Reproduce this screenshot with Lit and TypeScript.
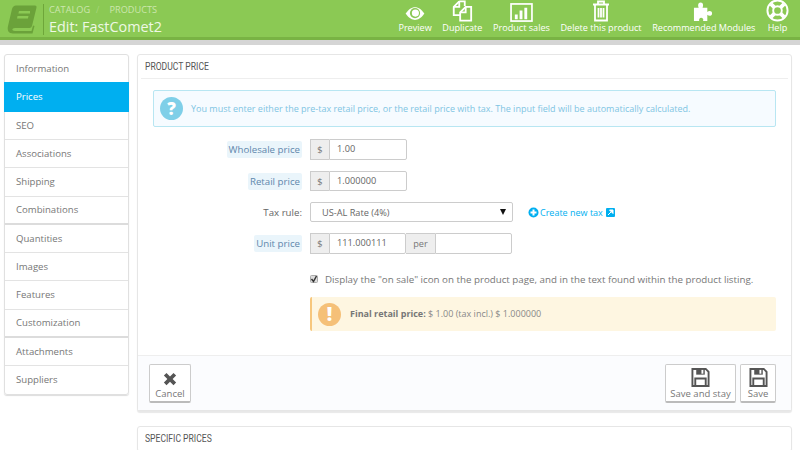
import { LitElement, html, css, svg } from "lit";
import { customElement } from "lit/decorators.js";

const tabs = ["Information","Prices","SEO","Associations","Shipping","Combinations","Quantities","Images","Features","Customization","Attachments","Suppliers"];
const thick = new Set(["Combinations","Customization"]);

const ico = {
  eye: svg`<svg width="24" height="17" viewBox="0 0 26 20"><path d="M2 10C6 4 10 2.500 13 2.500S20 4 24 10C20 16 16 17.500 13 17.500S6 16 2 10Z" fill="#fff"/><circle cx="13" cy="9.500" r="6" fill="#8bc954"/><circle cx="13.500" cy="9.500" r="4.200" fill="#fff"/></svg>`,
  dup: svg`<svg width="22" height="23" viewBox="0 0 24 24" fill="none" stroke="#fff" stroke-width="2"><path d="M9 2h6v5M9 2 3 8v9h7"/><path d="M3 8h6V2"/><path d="M16 8h6v15H10V14z"/><path d="M10 14h6V8"/></svg>`,
  sales: svg`<svg width="23" height="19" viewBox="0 0 24 20"><rect x="1" y="1" width="22" height="18" fill="none" stroke="#fff" stroke-width="1.800"/><path d="M5 12h3v5H5zM10 8h3v9h-3zM15 5h3v12h-3z" fill="#fff"/></svg>`,
  trash: svg`<svg width="18" height="22" viewBox="0 0 18 22" fill="none" stroke="#fff" stroke-width="1.800"><path d="M1 4.500h16M6 4V1.500h6V4M3 5v15.500h12V5"/><path d="M6.500 8v9.500M9 8v9.500M11.500 8v9.500"/></svg>`,
  puzzle: svg`<svg width="21" height="21" viewBox="0 0 22 22"><path d="M1 7h5C5 5 5 1.500 8 1.500S11 5 10 7h5v4.500c1.500-1.500 5-1.500 5 1.500s-3.500 3-5 1.500V21h-4.500c1-2-.5-3.500-2-3.500S6 19 6.500 21H1z" fill="#fff"/></svg>`,
  help: svg`<svg width="23" height="23" viewBox="0 0 24 24" fill="none" stroke="#fff"><circle cx="12" cy="12" r="10.500" stroke-width="2"/><circle cx="12" cy="12" r="4.500" stroke-width="2"/><path d="M5 5l4 4M19 5l-4 4M5 19l4-4M19 19l-4-4" stroke-width="4"/></svg>`,
};
const disk = svg`<svg width="19" height="19" viewBox="0 0 19 20"><path d="M1 1h14l3 3v15H1z" fill="none" stroke="#555" stroke-width="2"/><path d="M5 1h9v6H5z" fill="#555"/><path d="M10.500 2h2v4h-2z" fill="#fff"/><path d="M4 11h11v8H4z" fill="#fff" stroke="#555" stroke-width="2"/></svg>`;

@customElement("app-root")
export class AppRoot extends LitElement {
  static styles = css`
    :host { display: block; width: 800px; height: 450px; overflow: hidden; background: #fff; font-family: "Open Sans", sans-serif; font-size: 9.6px; color: #666; }
    * { box-sizing: border-box; }
    .top { height: 40px; background: #8bc954; border-bottom: 3px solid #79b344; display: flex; align-items: stretch; justify-content: space-between; overflow: hidden; }
    .brand { display: flex; align-items: flex-start; padding: 4px 0 0 7px; }
    .book { width: 37px; height: 31px; border-right: 1px solid #6ea63a; margin-right: 5px; padding-top: 1px; }
    .crumbs { color: #cbe7ae; font-size: 9.200px; line-height: 12px; display: flex; gap: 6px; }
    .crumbs i { font-style: normal; color: #a6d67b; margin-right: 4px; }
    .title { color: #eef8e4; font-size: 14.400px; line-height: 20px; margin-top: 1px; }
    .actions { display: flex; align-items: flex-end; gap: 10.600px; padding: 0 11px 3px 0; }
    .act { display: flex; flex-direction: column; align-items: center; color: #fff; font-size: 9.100px; line-height: 12px; white-space: nowrap; }
    .act svg { display: block; }
    .shade { height: 5px; background: #d5d5d5; }
    .main { display: flex; align-items: flex-start; gap: 8px; padding: 9px 8px 0 4px; }
    .side { width: 125px; border: 1px solid #e0e0e0; border-radius: 3px; box-shadow: 0 1px 1px #ddd; flex: none; }
    .tab { height: 28.250px; line-height: 28px; padding-left: 11px; border-bottom: 1px solid #e3e3e3; color: #777; }
    .tab:last-child { border-bottom: 0; }
    .tab.on { background: #00aff0; color: #fff; margin: -1px -1px 0; padding-left: 12px; height: 29.500px; border: 0; line-height: 29px; }
    .tab.thick { border-bottom-width: 2px; border-bottom-color: #dcdcdc; line-height: 26px; }
    .col { flex: 1; display: flex; flex-direction: column; gap: 15px; min-width: 0; }
    .panel { border: 1px solid #e6e6e6; border-radius: 3px; background: #fff; box-shadow: 0 2px 1px #e8e8e8; }
    .head { margin: 0 3px; padding-left: 4px; height: 24px; line-height: 23px; border-bottom: 1px solid #eee; font-family: "Roboto", sans-serif; font-size: 11.300px; font-weight: 400; color: #555; white-space: nowrap; }
    .head span { display: inline-block; transform: scaleX(.76); transform-origin: left center; }
    .alert { margin: 11px 15px 0; height: 37px; display: flex; align-items: center; gap: 8px; padding-left: 6px; background: #f6fbff; border: 1px solid #b8e6f2; border-radius: 2px; color: #7fc5e3; font-size: 9px; }
    .qmark { width: 23px; height: 23px; border-radius: 50%; background: #7fcfe8; color: #fff; font-weight: 800; font-size: 17px; line-height: 23px; text-align: center; flex: none; }
    .form { display: grid; grid-template-columns: 164px auto; column-gap: 8px; row-gap: 11px; margin-top: 12px; align-items: center; justify-content: start; }
    .lab { text-align: right; white-space: nowrap; font-size: 9.700px; line-height: 13px; }
    .lab span { padding: 2px 2px; }
    .tip { background: #eaf5fb; color: #5f87ac; border-radius: 2px; }
    .group { display: flex; height: 21px; }
    .group.h20 { height: 20px; }
    .add { width: 19px; background: #eee; border: 1px solid #ccc; border-right: 0; display: flex; align-items: center; justify-content: center; color: #777; font-size: 9.200px; }
    .add.per { width: 29px; border-left: 0; }
    .inp { border: 1px solid #ccc; background: #fff; padding-left: 7px; line-height: 18px; font-size: 9.200px; color: #666; border-radius: 0 2px 2px 0; }
    .w78 { width: 78px; } .w77 { width: 77px; }
    .sel { width: 203px; height: 20px; border: 1px solid #ccc; border-radius: 2px; padding-left: 11px; line-height: 20px; font-size: 9.200px; position: relative; }
    .arrow { position: absolute; right: 6px; top: 6px; width: 0; height: 0; border: 3.500px solid transparent; border-top: 6px solid #111; border-bottom: 0; }
    .taxrow { display: flex; align-items: center; gap: 15px; }
    .new { display: flex; align-items: center; gap: 1px; color: #00aff0; font-size: 9px; white-space: nowrap; }
    .new svg:last-child { margin-left: 2px; }
    .chk { margin: 18px 0 0 172px; display: flex; align-items: center; gap: 7px; font-size: 9.750px; height: 14px; color: #777; white-space: nowrap; }
    .box { width: 8px; height: 8px; background: #ddd; border: 1px solid #aaa; border-radius: 1.500px; position: relative; flex: none; }
    .warn { margin: 11px 15px 0 172px; height: 34px; display: flex; align-items: center; gap: 9px; padding-left: 6px; background: #fef6e1; border-left: 2px solid #f7c77d; border-radius: 2px; color: #888; font-size: 9px; white-space: pre; }
    .warn span { margin-bottom: 2px; }
    .warn b { color: #777; }
    .bang { width: 23px; height: 23px; border-radius: 50%; background: #f5c078; color: #fff; font-weight: 800; font-size: 19px; line-height: 23px; text-align: center; flex: none; }
    .foot { margin-top: 24px; height: 55px; background: #fbfcfe; border-top: 1px solid #eee; padding: 8px 15px 0 11px; display: flex; gap: 4px; }
    .btn { height: 39px; background: #fff; border: 1px solid #ccc; border-bottom: 2px solid #bbb; border-radius: 2px; display: flex; flex-direction: column; align-items: center; justify-content: flex-end; font-size: 9.500px; line-height: 14px; color: #777; white-space: nowrap; }
    .btn svg { display: block; }
    .btn .x { margin-bottom: 1px; }
    .w42 { width: 42px; } .w71 { width: 71px; } .w36 { width: 36px; }
    .sp { flex: 1; }
  `;

  render() {
    return html`
      <div class="top">
        <div class="brand">
          <div class="book"><svg width="30" height="29" viewBox="0 0 30 29"><path d="M9 0.500H28Q30 0.500 29.500 2.500L25 21Q24.500 23 22.500 23H8C4.500 23 4.500 26 8 26H24.500L26 20.500 27.500 21 25.500 28.500H6C1.500 28.500 0 25.500 1 21L5 4Q6 0.500 9 0.500Z" fill="#6ba23a"/><path d="M12 6h11v2.500H11.400zM10.500 11h11l-.6 2.500H10z" fill="#8bc954"/></svg></div>
          <div><div class="crumbs"><span>CATALOG</span><i>/</i><span>PRODUCTS</span></div><div class="title">Edit: FastComet2</div></div>
        </div>
        <div class="actions">
          <div class="act">${ico.eye}Preview</div>
          <div class="act">${ico.dup}Duplicate</div>
          <div class="act">${ico.sales}Product sales</div>
          <div class="act">${ico.trash}Delete this product</div>
          <div class="act">${ico.puzzle}Recommended Modules</div>
          <div class="act">${ico.help}Help</div>
        </div>
      </div>
      <div class="shade"></div>
      <div class="main">
        <div class="side">
          ${tabs.map(t => html`<div class="tab ${t === "Prices" ? "on" : ""} ${thick.has(t) ? "thick" : ""}">${t}</div>`)}
        </div>
        <div class="col">
          <div class="panel">
            <div class="head"><span>PRODUCT PRICE</span></div>
            <div class="alert"><div class="qmark">?</div>You must enter either the pre-tax retail price, or the retail price with tax. The input field will be automatically calculated.</div>
            <div class="form">
              <div class="lab"><span class="tip">Wholesale price</span></div>
              <div class="group"><div class="add">$</div><div class="inp w78">1.00</div></div>
              <div class="lab"><span class="tip">Retail price</span></div>
              <div class="group h20"><div class="add">$</div><div class="inp w78">1.000000</div></div>
              <div class="lab">Tax rule:</div>
              <div class="taxrow">
                <div class="sel">US-AL Rate (4%)<span class="arrow"></span></div>
                <div class="new"><svg width="11" height="11" viewBox="0 0 11 11"><circle cx="5.500" cy="5.500" r="5" fill="#00aff0"/><path d="M2.500 4.500h2v-2h2v2h2v2h-2v2h-2v-2h-2z" fill="#fff"/></svg>Create new tax<svg width="9" height="9" viewBox="0 0 9 9"><rect width="9" height="9" rx="1" fill="#00aff0"/><path d="M2 7l3-3M3.500 2H7v3.500z" stroke="#fff" fill="#fff"/></svg></div>
              </div>
              <div class="lab"><span class="tip">Unit price</span></div>
              <div class="group"><div class="add">$</div><div class="inp w77">111.000111</div><div class="add per">per</div><div class="inp w77"></div></div>
            </div>
            <div class="chk"><div class="box"><svg width="8" height="8" viewBox="0 0 8 8" style="display:block;margin:-1px 0 0 -1px" ><path d="M1.500 4l2 2.500L6.500 1" fill="none" stroke="#333" stroke-width="1.500"/></svg></div>Display the "on sale" icon on the product page, and in the text found within the product listing.</div>
            <div class="warn"><div class="bang">!</div><span><b>Final retail price:</b> $ 1.00 (tax incl.) $ 1.000000</span></div>
            <div class="foot">
              <div class="btn w42"><svg class="x" width="14" height="14" viewBox="0 0 16 16"><path d="M4 1l4 4 4-4 3 3-4 4 4 4-3 3-4-4-4 4-3-3 4-4-4-4z" fill="#555"/></svg>Cancel</div>
              <div class="sp"></div>
              <div class="btn w71">${disk}Save and stay</div>
              <div class="btn w36">${disk}Save</div>
            </div>
          </div>
          <div class="panel"><div class="head"><span>SPECIFIC PRICES</span></div></div>
        </div>
      </div>
    `;
  }
}
